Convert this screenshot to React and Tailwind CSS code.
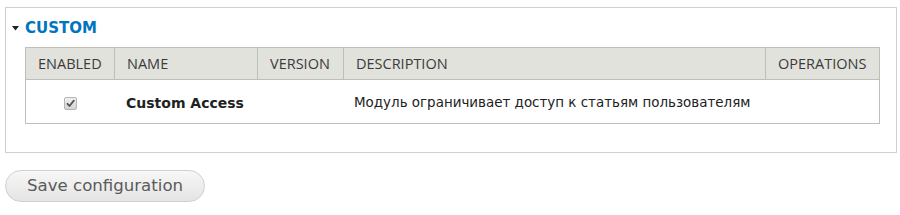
import React from "react";

const cols = [
  { label: "ENABLED", w: "w-[88px]" },
  { label: "NAME", w: "w-[143px] border-l border-[#bebfb9]" },
  { label: "VERSION", w: "w-[86px] border-l border-[#bebfb9]" },
  { label: "DESCRIPTION", w: "w-[422px] border-l border-[#bebfb9]" },
  { label: "OPERATIONS", w: "flex-1 border-l border-[#bebfb9]" },
];

function Checkbox() {
  return (
    <div className="w-[13px] h-[13px] rounded-[2px] border border-[#b5b5b5] bg-gradient-to-b from-[#f0f0f0] to-[#d4d4d4] flex items-center justify-center">
      <svg width="9" height="9" viewBox="0 0 9 9">
        <path d="M1.5 4.8 L3.5 7 L7.8 1.6" fill="none" stroke="#555" strokeWidth="1.8" strokeLinecap="round" strokeLinejoin="round" />
      </svg>
    </div>
  );
}

export default function App() {
  return (
    <div className="w-[900px] h-[215px] bg-white pl-[5px] pt-[7px] font-['DejaVu_Sans',sans-serif]">
      {/* fieldset */}
      <div className="w-[892px] border border-[#cfcfcf] bg-white pl-[19px] pt-[10px] pb-[28px]">
        <div className="h-[20px] flex items-center -ml-[13px]">
          <svg width="7" height="5" viewBox="0 0 7 5" className="mr-[6px]">
            <path d="M0 0 L7 0 L3.5 4.5 Z" fill="#222" />
          </svg>
          <span className="text-[15px] font-bold text-[#0074bd] leading-none">CUSTOM</span>
        </div>

        {/* table */}
        <div className="mt-[9px] w-[855px] border border-[#bebfb9]">
          <div className="flex h-[32px] bg-[#e1e2dc] border-b border-[#bebfb9] font-['Open_Sans',sans-serif] text-[14.5px] text-[#3b3b3b]">
            {cols.map((c) => (
              <div key={c.label} className={`${c.w} flex items-center px-[12px]`}>
                {c.label}
              </div>
            ))}
          </div>
          <div className="flex h-[43px] text-[#222] pt-[4px]">
            <div className="w-[88px] flex items-center justify-center">
              <Checkbox />
            </div>
            <div className="w-[143px] flex items-center pl-[12px] font-bold text-[14px]">Custom Access</div>
            <div className="w-[86px]" />
            <div className="w-[422px] flex items-center pl-[11px] whitespace-nowrap text-[13.45px]">
              Модуль ограничивает доступ к статьям пользователям
            </div>
            <div className="flex-1" />
          </div>
        </div>
      </div>

      <button className="mt-[17px] w-[200px] h-[32px] rounded-full border border-[#d0d0d0] bg-gradient-to-b from-[#f7f7f7] to-[#e4e4e4] text-left pl-[21px] text-[16.6px] text-[#5a5a5a] font-['DejaVu_Sans',sans-serif]">
        Save configuration
      </button>
    </div>
  );
}
